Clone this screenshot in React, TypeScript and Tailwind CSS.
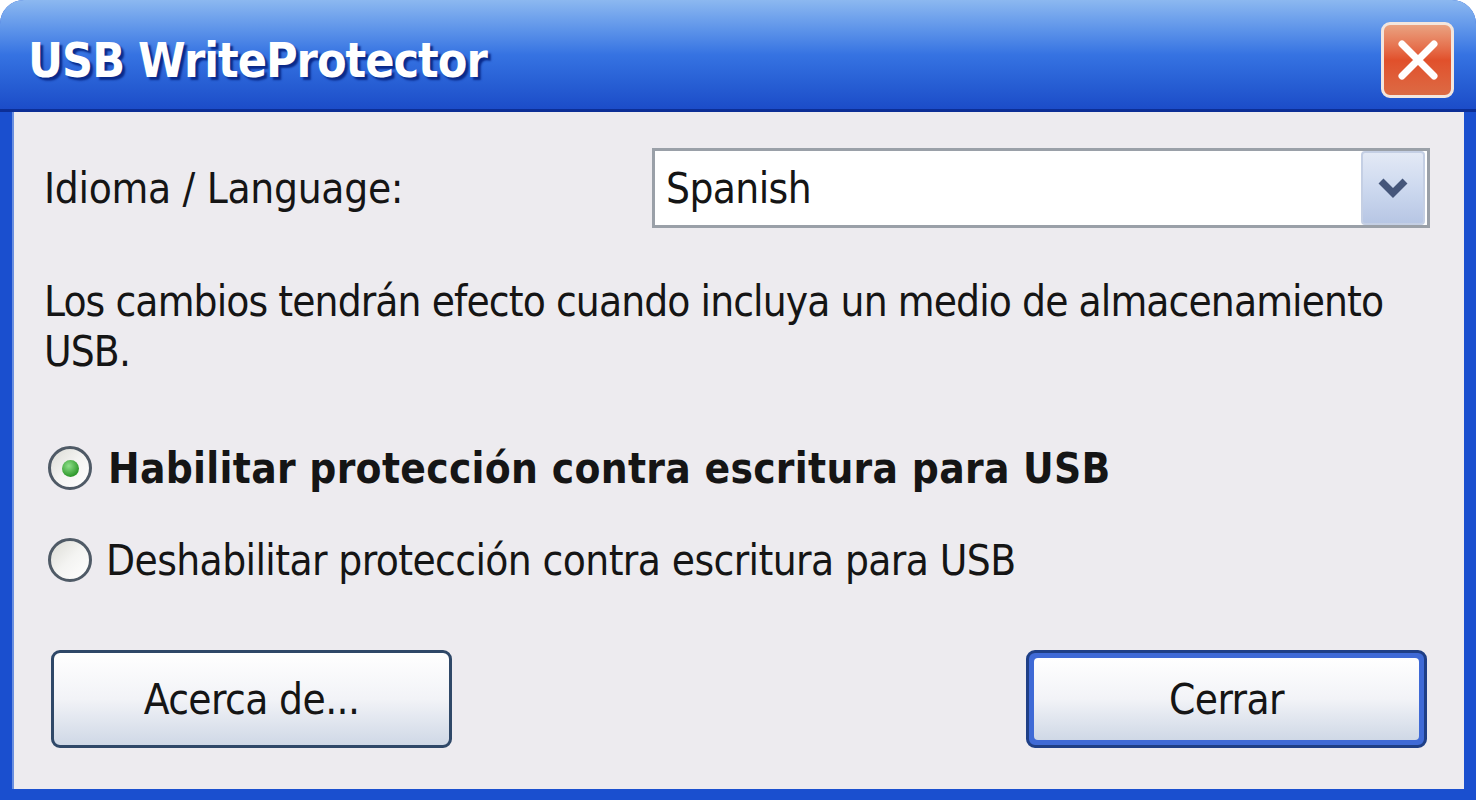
import React from "react";

const bodyFont = { fontFamily: '"DejaVu Sans", "Liberation Sans", sans-serif' };

function Radio({ checked }: { checked: boolean }) {
  return (
    <div className="w-[44px] h-[44px] rounded-full border-[3px] border-[#4f5a66] bg-gradient-to-br from-[#dcdcd6] via-[#f4f4f2] to-white flex items-center justify-center shrink-0">
      {checked && (
        <div className="w-[17px] h-[17px] rounded-full bg-[radial-gradient(circle_at_40%_35%,#8fe08a,#2f9a2c_70%)]" />
      )}
    </div>
  );
}

export default function App() {
  return (
    <div className="w-[1476px] h-[800px] bg-white overflow-hidden" style={bodyFont}>
      <div className="w-full h-full rounded-t-[24px] bg-[#1a4fcf] flex flex-col overflow-hidden">
        {/* Title bar */}
        <div className="h-[112px] shrink-0 bg-gradient-to-b from-[#8cb8f0] via-[#3673e2] to-[#1c4cc8] border-b-[3px] border-[#0c2e96] flex items-center justify-between pl-[28px] pr-[22px] pt-[10px]">
          <div
            className="text-white text-[48px] font-bold tracking-[-1px] [text-shadow:3px_3px_2px_#0a2a8a]"
            style={{ fontFamily: '"DejaVu Sans", sans-serif', fontStretch: "condensed" }}
          >
            USB WriteProtector
          </div>
          <div className="w-[73px] h-[76px] rounded-[9px] border-[3px] border-[#f3e6de] bg-gradient-to-b from-[#e9a281] via-[#e1502b] to-[#dc6a44] flex items-center justify-center">
            <svg width="44" height="44" viewBox="0 0 44 44">
              <path d="M6 6 L38 38 M38 6 L6 38" stroke="#fff" strokeWidth="7" strokeLinecap="round" />
            </svg>
          </div>
        </div>
        {/* Client */}
        <div className="flex-1 flex px-[12px] pb-[11px]">
          <div className="flex-1 bg-[#edebef] border-l-[2px] border-[#6a8fe0] flex flex-col pl-[30px] pr-[34px] text-[#151515] text-[42px]" style={{ fontStretch: "condensed" }}>
            <div className="mt-[36px] h-[80px] flex items-center justify-between">
              <span className="tracking-[-0.3px]">Idioma / Language:</span>
              <div className="w-[778px] h-[80px] border-[3px] border-[#9aa0a8] bg-white flex items-center justify-between pl-[11px] pr-[2px]">
                <span className="tracking-[-0.6px]">Spanish</span>
                <div className="w-[64px] h-[74px] rounded-[4px] bg-gradient-to-b from-[#e3e9f5] via-[#cdd9ef] to-[#b7c6e4] border-[2px] border-[#c4cfe4] flex items-center justify-center">
                  <svg width="36" height="28" viewBox="0 0 36 28">
                    <path d="M6 7 L18 19 L30 7" stroke="#45567a" strokeWidth="7" fill="none" strokeLinejoin="miter" />
                  </svg>
                </div>
              </div>
            </div>
            <div className="mt-[49px] leading-[50px] tracking-[-0.9px]">
              Los cambios tendrán efecto cuando incluya un medio de almacenamiento
              <br />
              USB.
            </div>
            <div className="mt-[66px] h-[50px] flex items-center pl-[4px] gap-[16px]">
              <Radio checked />
              <span className="font-bold tracking-[0.3px]">Habilitar protección contra escritura para USB</span>
            </div>
            <div className="mt-[42px] h-[50px] flex items-center pl-[4px] gap-[14px]">
              <Radio checked={false} />
              <span className="tracking-[-0.6px]">Deshabilitar protección contra escritura para USB</span>
            </div>
            <div className="mt-[65px] flex justify-between pl-[7px] pr-[3px]">
              <div className="w-[401px] h-[98px] rounded-[9px] border-[3px] border-[#2f4868] bg-gradient-to-b from-white via-[#f2f3f7] to-[#cfd8e6] flex items-center justify-center">
                <span className="tracking-[-0.6px]">Acerca de...</span>
              </div>
              <div className="w-[401px] h-[98px] rounded-[9px] border-[3px] border-[#1f3f86] bg-[#3f6ad6] p-[5px] flex">
                <div className="flex-1 rounded-[4px] bg-gradient-to-b from-white via-[#f2f3f7] to-[#cfd8e6] flex items-center justify-center">
                  <span className="tracking-[-0.6px]">Cerrar</span>
                </div>
              </div>
            </div>
          </div>
        </div>
      </div>
    </div>
  );
}
